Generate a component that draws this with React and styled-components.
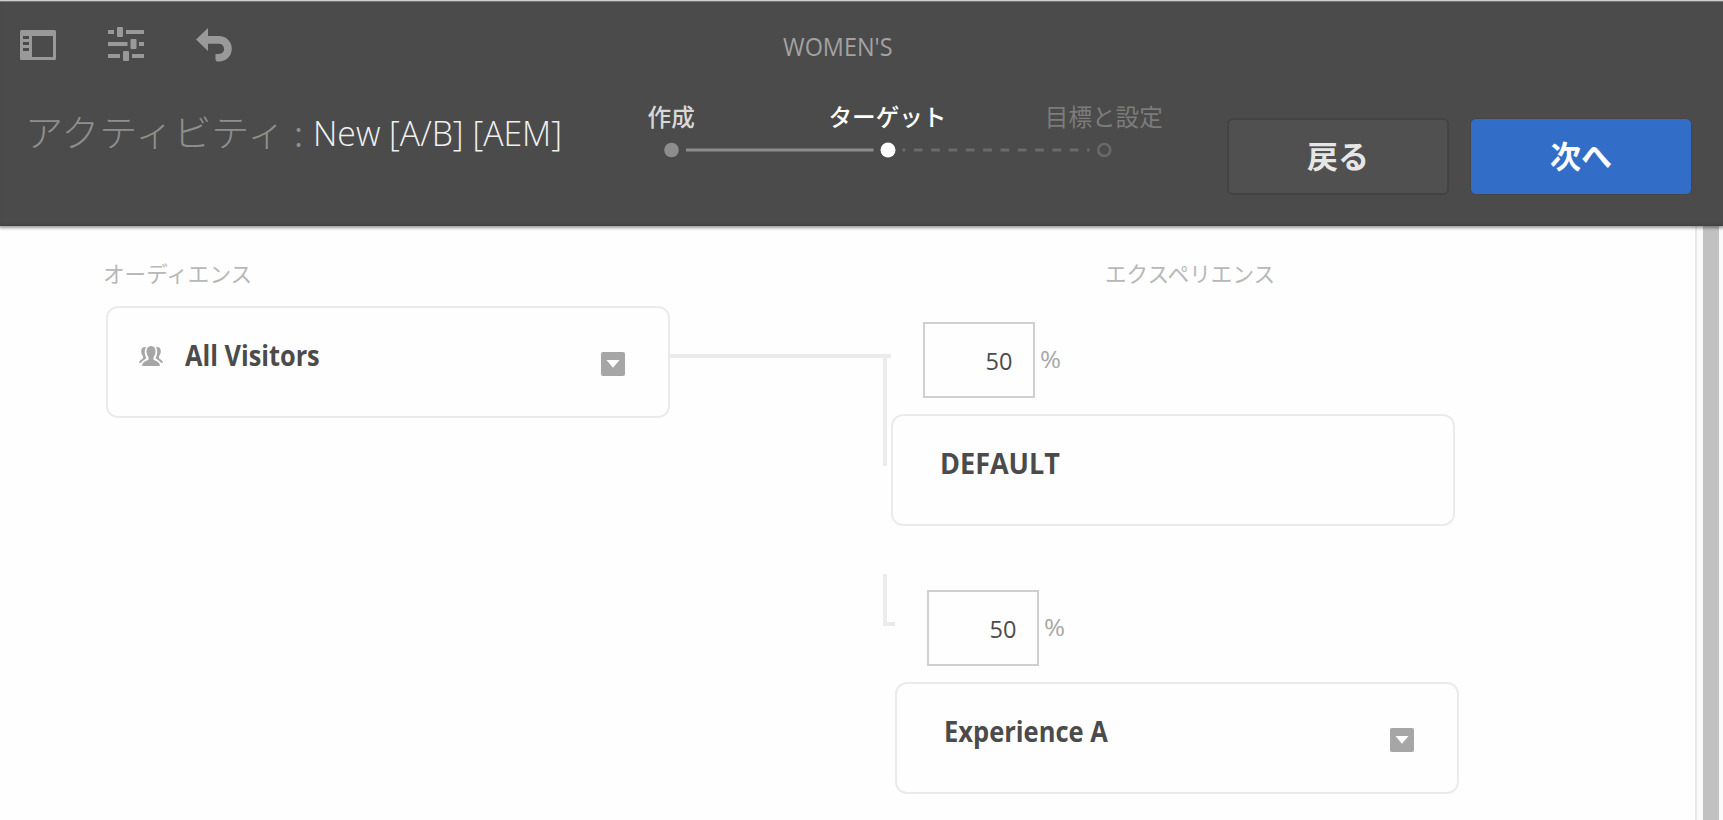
import React from "react";
import styled, { createGlobalStyle } from "styled-components";

const latin = `"Open Sans", "Noto Sans", "Noto Sans CJK JP", sans-serif`;
const japanese = `"Noto Sans CJK JP", "Noto Sans", sans-serif`;

const GlobalStyle = createGlobalStyle`
  * { box-sizing: border-box; }
  html, body { margin: 0; height: 100%; overflow: hidden; }
  body { background: #fefefe; font-family: ${latin}; color: #4b4b4b; }
`;

const Page = styled.div`
  display: flex;
  flex-direction: column;
  width: 1723px;
  height: 820px;
  overflow: hidden;
`;

const Header = styled.header`
  position: relative;
  z-index: 1;
  flex: none;
  height: 226px;
  background: #4b4b4b;
  border-top: 1px solid #cdd1d0;
  box-shadow: inset 0 1px 0 #727474, inset 0 -3px 2px -1px #444, 0 1px 3px 1px rgba(0, 0, 0, 0.4);
`;

const Toolbar = styled.div`
  display: flex;
  align-items: flex-start;
  height: 81px;
  padding: 25px 0 0 20px;
`;

const ToolIcon = styled.svg`
  width: 36px;
  height: 38px;
  margin-right: 52px;
  fill: #999;
`;

const Text = styled.span`
  display: inline-block;
  white-space: nowrap;
  line-height: 1;
  transform: scaleX(${(p) => p.$fit || 1});
  transform-origin: ${(p) => p.$origin || "left"} center;
`;

const SiteName = styled(Text)`
  margin: 8px 0 0 499px;
  font-size: 25px;
  color: #a2a2a2;
`;

const ActivityBar = styled.div`
  display: flex;
  align-items: flex-start;
  height: 144px;
`;

const Title = styled.div`
  display: flex;
  width: 563px;
  padding: 31px 0 0 25px;
`;

const TitlePrefix = styled(Text)`
  flex: none;
  width: 288px;
  font-family: ${japanese};
  font-size: 37px;
  font-weight: 300;
  color: #8e8e8e;
`;

const TitleName = styled(Text)`
  flex: none;
  margin-top: 2px;
  font-size: 35px;
  font-weight: 340;
  color: #f0f0f0;
`;

const Stepper = styled.div`
  width: 649px;
  padding-top: 23px;
`;

const StepLabels = styled.div`
  display: grid;
  grid-template-columns: repeat(3, 1fr);
  justify-items: center;
`;

const StepLabel = styled(Text)`
  font-family: ${japanese};
  font-size: 23.6px;
  font-weight: ${(p) => (p.$state === "todo" ? 400 : 500)};
  color: ${(p) => ({ done: "#d8d8d8", current: "#fff", todo: "#7c7c7c" })[p.$state]};
`;

const Track = styled.svg`
  display: block;
  width: 649px;
  height: 20px;
  margin-top: 11px;
`;

const Buttons = styled.div`
  display: flex;
  gap: 21px;
  padding: 36px 0 0 15px;
`;

const Button = styled.button`
  width: 222px;
  height: 77px;
  padding: 0 0 4px;
  border: ${(p) => (p.$primary ? "1px solid #434649" : "2px solid #434343")};
  border-radius: 6px;
  background: ${(p) => (p.$primary ? "#326ec8" : "#505050")};
  color: ${(p) => (p.$primary ? "#fff" : "#e6e6e6")};
  font-family: ${japanese};
  font-size: 31px;
  font-weight: 700;
`;

const Body = styled.div`
  display: flex;
  flex: 1;
`;

const Canvas = styled.main`
  width: 1695px;
  padding: 36px 0 0 106px;
`;

const Gutter = styled.aside`
  flex: 1;
  border-left: 2px solid #e8e8e8;
  background: #fafafa;
  padding: 0 4px 0 6px;
`;

const ScrollThumb = styled.div`
  height: 100%;
  background: #c1c1c1;
`;

const Columns = styled.div`
  display: grid;
  grid-template-columns: 564px 221px 568px;
  align-items: start;
`;

const Headings = styled(Columns)`
  height: 44px;
`;

const Heading = styled(Text)`
  grid-column: ${(p) => p.$column};
  justify-self: start;
  margin-left: ${(p) => p.$indent}px;
  font-family: ${japanese};
  font-size: 21.6px;
  color: #b8b8b8;
`;

const Card = styled.section`
  display: flex;
  align-items: flex-start;
  width: 564px;
  height: 112px;
  padding: ${(p) => (p.$audience ? "31px 43px 0 31px" : "31px 43px 0 47px")};
  border: 2px solid #ebebeb;
  border-radius: 12px;
`;

const CardName = styled(Text)`
  flex: 1;
  margin-top: 2px;
  font-size: 28px;
  font-weight: 700;
`;

const PeopleIcon = styled.svg`
  width: 24px;
  height: 20px;
  margin: 7px 22px 0 0;
  fill: #a6a6a6;
`;

const MenuButton = styled.button`
  display: flex;
  width: 24px;
  height: 24px;
  margin-top: 13px;
  padding: 0;
  border: 0;
  border-radius: 2px;
  background: #a6a6a6;
`;

const Connector = styled.div`
  display: flex;
  flex-direction: column;
  padding-top: 48px;
`;

const Rule = styled.div`
  height: 4px;
  background: #ebebeb;
`;

const Drop = styled.div`
  width: 4px;
  height: 108px;
  margin-left: 213px;
  background: #ebebeb;
`;

const Elbow = styled.div`
  width: 12px;
  height: 52px;
  margin: 108px 0 0 213px;
  border: solid #ebebeb;
  border-width: 0 0 4px 4px;
`;

const Experiences = styled.div`
  display: flex;
  flex-direction: column;
  gap: 64px;
  padding-top: 16px;
`;

const Experience = styled.div`
  display: flex;
  flex-direction: column;
  gap: 16px;
  margin-left: ${(p) => p.$indent || 0}px;
`;

const Share = styled.label`
  display: flex;
  align-items: flex-start;
  gap: 5px;
  margin-left: 32px;
`;

const ShareBox = styled.div`
  display: flex;
  justify-content: flex-end;
  width: 112px;
  height: 76px;
  padding: 25px 21px 0 0;
  border: 2px solid #d0d0d0;
  font-size: 24px;
`;

const Percent = styled(Text)`
  padding-top: 25px;
  font-size: 24px;
  color: #a8a8a8;
`;

function Menu() {
  return (
    <MenuButton aria-label="menu">
      <svg width="24" height="24"><path d="M5.500 8h13L12 15.700z" fill="#fff" /></svg>
    </MenuButton>
  );
}

function ExperienceItem({ name, fit, indent, menu }) {
  return (
    <Experience $indent={indent}>
      <Share>
        <ShareBox><Text $fit={0.98} $origin="right">50</Text></ShareBox>
        <Percent $fit={1.06}>%</Percent>
      </Share>
      <Card>
        <CardName $fit={fit}>{name}</CardName>
        {menu && <Menu />}
      </Card>
    </Experience>
  );
}

export default function App() {
  return (
    <Page>
      <GlobalStyle />
      <Header>
        <Toolbar>
          <ToolIcon viewBox="0 0 36 38">
            <path fillRule="evenodd" d="M1.500 4h33A1.500 1.500 0 0 1 36 5.500v27a1.500 1.500 0 0 1-1.500 1.500h-33A1.500 1.500 0 0 1 0 32.500v-27A1.500 1.500 0 0 1 1.500 4zM12 10v21h21V10zM3 10v3h6v-3zm0 6v3h6v-3zm0 6v3h6v-3z" />
          </ToolIcon>
          <ToolIcon viewBox="0 0 36 38">
            <path d="M0 4h6v4H0zM18 4h18v4H18zM0 16h19.500v4H0zM31 16h5v4h-5zM0 28h12v4H0zM24 28h12v4H24z" />
            <rect x="9" y="1" width="6" height="10" rx="1" />
            <rect x="22.500" y="13" width="6" height="10" rx="1" />
            <rect x="15" y="25" width="6" height="10" rx="1" />
          </ToolIcon>
          <ToolIcon viewBox="0 0 36 38">
            <path d="M0 13.500 12 2v8h11a12.600 12.600 0 0 1 0 25.600c-3 0-3.500-.6-3.500-2.300V28H23a5 5 0 0 0 0-10.200H12V25z" />
          </ToolIcon>
          <SiteName $fit={0.937}>WOMEN'S</SiteName>
        </Toolbar>
        <ActivityBar>
          <Title>
            <TitlePrefix $fit={1.03}>アクティビティ :</TitlePrefix>
            <TitleName $fit={0.965}>New [A/B] [AEM]</TitleName>
          </Title>
          <Stepper>
            <StepLabels>
              <StepLabel $state="done">作成</StepLabel>
              <StepLabel $state="current">ターゲット</StepLabel>
              <StepLabel $state="todo">目標と設定</StepLabel>
            </StepLabels>
            <Track viewBox="0 0 649 20">
              <circle cx="108.500" cy="10" r="7.300" fill="#8d8d8d" />
              <path d="M123 10h187.500" stroke="#8d8d8d" strokeWidth="3" />
              <circle cx="325" cy="10" r="7.500" fill="#fff" />
              <path d="M339.500 10h187" stroke="#6b6b6b" strokeWidth="3" strokeDasharray="8.700 8.630" strokeDashoffset="6" />
              <circle cx="541.300" cy="10" r="6" fill="none" stroke="#686868" strokeWidth="2.600" />
            </Track>
          </Stepper>
          <Buttons>
            <Button>戻る</Button>
            <Button $primary>次へ</Button>
          </Buttons>
        </ActivityBar>
      </Header>
      <Body>
        <Canvas>
          <Headings>
            <Heading $column={1} $indent={-3}>オーディエンス</Heading>
            <Heading $column={3} $indent={214}>エクスペリエンス</Heading>
          </Headings>
          <Columns>
            <Card $audience>
              <PeopleIcon viewBox="0 0 24 20">
                <path d="M12 0c3 0 4.500 2.200 4.500 5.200 0 2.600-.9 4.600-2 5.800v2.400c1.500 1.300 6.200 1.800 6.500 6.600H3c.3-4.800 5-5.300 6.500-6.600V11c-1.100-1.200-2-3.200-2-5.800C7.500 2.200 9 0 12 0z" />
                <path d="M7 1C3.500.7 2 2.800 2.200 5.400c.1 2 .8 3.500 1.800 4.600v2.200C3 13.500.3 13.800 0 17l2.500-.5c1.200-2 3.300-2.700 4.700-3.900v-.9C5.300 8 5.200 4 7 1zM17 1c3.500-.3 5 1.800 4.800 4.400-.1 2-.8 3.500-1.800 4.600v2.200c1 1.300 3.700 1.600 4 4.800l-2.500-.5c-1.200-2-3.300-2.700-4.700-3.900v-.9c1.900-3.700 2-7.700.2-10.700z" />
              </PeopleIcon>
              <CardName $fit={0.904}>All Visitors</CardName>
              <Menu />
            </Card>
            <Connector>
              <Rule />
              <Drop />
              <Elbow />
            </Connector>
            <Experiences>
              <ExperienceItem name="DEFAULT" fit={0.965} />
              <ExperienceItem name="Experience A" fit={0.911} indent={4} menu />
            </Experiences>
          </Columns>
        </Canvas>
        <Gutter>
          <ScrollThumb />
        </Gutter>
      </Body>
    </Page>
  );
}
